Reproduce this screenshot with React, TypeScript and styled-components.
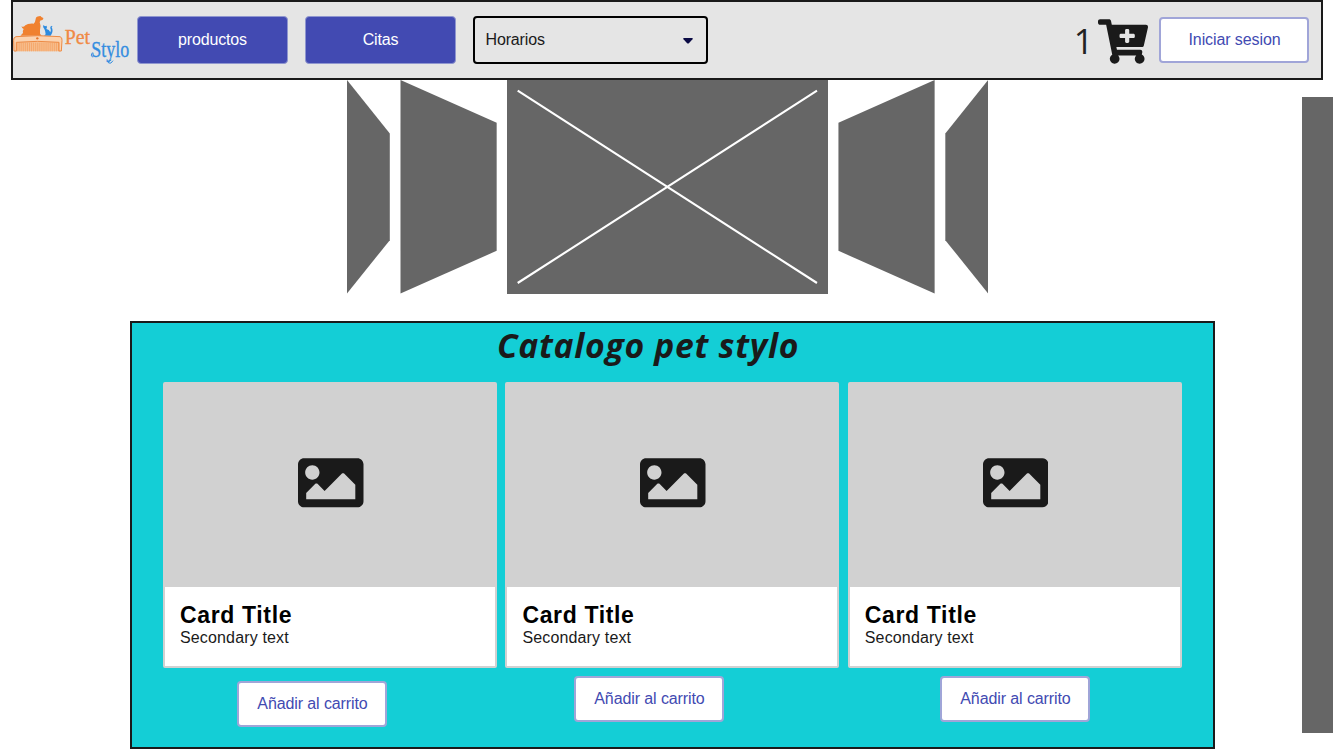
import React from "react";
import styled, { createGlobalStyle } from "styled-components";
import { FaCartPlus, FaImage } from "react-icons/fa";

const GlobalStyle = createGlobalStyle`
  * { box-sizing: border-box; }
  body {
    margin: 0;
    background: #fff;
    font-family: "Liberation Sans", Arial, sans-serif;
    font-size: 16px;
    overflow: hidden;
  }
`;

const Page = styled.div`
  width: 1333px;
  height: 749px;
  overflow: hidden;
`;

const Header = styled.header`
  display: flex;
  align-items: flex-start;
  width: 1312px;
  height: 80px;
  margin-left: 11px;
  border: 2px solid #1a1a1a;
  background: #e5e5e5;
`;

const Logo = styled.svg`
  display: block;
  width: 122px;
  height: 76px;
  flex: none;
  overflow: visible;
`;

const Nav = styled.nav`
  display: flex;
  align-items: flex-start;
  gap: 17px;
  margin: 14px 0 0 2px;
`;

const NavButton = styled.button`
  width: 151px;
  height: 48px;
  padding: 0;
  border: 1px solid #8f96cf;
  border-radius: 4px;
  background: #424ab2;
  color: #fff;
  font: inherit;
  letter-spacing: -0.15px;
`;

const Select = styled.div`
  display: flex;
  align-items: center;
  justify-content: space-between;
  width: 235px;
  height: 48px;
  padding: 0 13px 0 10.5px;
  border: 2px solid #000;
  border-radius: 4px;
  color: #1a1a1a;
  letter-spacing: -0.15px;
`;

const Caret = styled.svg`
  width: 10px;
  height: 6px;
  margin-top: 2px;
`;

const Account = styled.div`
  display: flex;
  align-items: flex-start;
  margin-left: auto;
  padding-right: 12px;
`;

const Count = styled.span`
  margin: 15px 4px 0 0;
  font: 400 34.5px/48px "Open Sans", sans-serif;
  color: #222;
`;

const CartIcon = styled(FaCartPlus)`
  width: 50px;
  height: 45px;
  margin: 17px 11.5px 0 0;
  color: #1a1a1a;
`;

const OutlineButton = styled.button`
  width: 150px;
  height: 46px;
  padding: 0 0 1px 1px;
  border: 2px solid #a0a5d8;
  border-radius: 4px;
  background: #fff;
  color: #424ab2;
  font: inherit;
  letter-spacing: -0.1px;
`;

const LoginButton = styled(OutlineButton)`
  margin-top: 15px;
`;

const Body = styled.div`
  display: flex;
  align-items: flex-start;
`;

const Main = styled.main`
  width: 1301.5px;
  flex: none;
`;

const Rail = styled.aside`
  width: 31.5px;
  height: 636px;
  margin-top: 17px;
  background: #666;
`;

const Carousel = styled.section`
  display: flex;
  gap: 10.7px;
  height: 213.5px;
  padding-left: 347px;
`;

const Slide = styled.div<{ $width: number; $inset?: number; $side?: "left" | "right" }>`
  width: ${(p) => p.$width}px;
  flex: none;
  background: #666;
  ${(p) =>
    p.$side === "left" &&
    `clip-path: polygon(0 0, 100% ${p.$inset}%, 100% ${100 - (p.$inset ?? 0)}%, 0 100%);`}
  ${(p) =>
    p.$side === "right" &&
    `clip-path: polygon(0 ${p.$inset}%, 100% 0, 100% 100%, 0 ${100 - (p.$inset ?? 0)}%);`}
`;

const Cross = styled.svg`
  display: block;
  width: 100%;
  height: 100%;
`;

const Catalog = styled.section`
  width: 1085px;
  height: 428px;
  margin: 27.5px 0 0 130px;
  border: 2px solid #1a1a1a;
  background: #14ced6;
`;

const CatalogTitle = styled.h1`
  margin: 0 0 0 365px;
  height: 59px;
  font: italic 700 33.7px/45px "Open Sans", sans-serif;
  letter-spacing: 0.72px;
  color: #1a1a1a;
`;

const Products = styled.div`
  display: flex;
  gap: 8.4px;
  padding-left: 31px;
`;

const Product = styled.div`
  width: 334px;
  flex: none;
`;

const Card = styled.article`
  height: 286px;
  border: 2px solid #d1d1d1;
  border-radius: 2px;
  background: #fff;
`;

const CardMedia = styled.div`
  display: flex;
  align-items: center;
  justify-content: center;
  height: 202.5px;
  padding: 0 0 4.5px 1.5px;
  background: #d1d1d1;
  color: #1a1a1a;
`;

const CardText = styled.div`
  padding: 13.5px 15px;
`;

const CardTitle = styled.h2`
  margin: 0;
  font-size: 23px;
  line-height: 30px;
  letter-spacing: 0.65px;
  color: #000;
`;

const CardSubtitle = styled.p`
  margin: 0;
  line-height: 16px;
  letter-spacing: 0.15px;
  color: #1a1a1a;
`;

const AddButton = styled(OutlineButton)<{ $left: number; $top: number }>`
  display: block;
  margin: ${(p) => p.$top}px 0 0 ${(p) => p.$left}px;
`;

const products = [
  { left: 74, top: 13 },
  { left: 68.6, top: 8 },
  { left: 92.2, top: 8 },
];

const teeth = Array.from({ length: 23 }, (_, i) => 48 + i * 5.8);

function PetLogo() {
  return (
    <Logo viewBox="39 6 366 228" role="img" aria-label="Pet Stylo">
      <path
        fill="#f0812f"
        d="M61 107 L69 99 Q66 95 71 87 Q66 85 64 78 Q69 84 76 76 Q83 70 101 71 Q106 67 107 57 Q108 49 117 49 Q122 46 124 51 L130 54 Q130 61 122 61 L119 66 Q124 78 120 90 L120 101 L125 107 H61 Z"
      />
      <path
        fill="#2c8be0"
        d="M130 75 L135 79 L140 77 Q142 83 139 87 Q148 88 151 97 Q155 91 151 85 Q149 79 156 77 Q159 79 155 82 Q162 94 152 107 H132 L137 103 Q137 94 133 87 Q127 83 130 75 Z"
      />
      <path fill="#f7c193" d="M45 124H181V154H45Z" />
      {teeth.map((x) => (
        <path key={x} d={`M${x} 128V154`} stroke="#f4a264" strokeWidth="2.6" />
      ))}
      <path
        fill="#fbd3b0"
        stroke="#ee8a43"
        strokeWidth="3"
        d="M48 110 Q113 104 180 110 Q187 112 186 121 L184 153 H177 V127 Q113 121 49 127 V153 H42 L41 121 Q40 112 48 110 Z"
      />
      <circle cx="112" cy="115" r="3.5" fill="#e6752a" />
      <g fontFamily="Liberation Serif, serif" strokeWidth="1">
        <text x="194" y="132" fontSize="64" textLength="76" lengthAdjust="spacingAndGlyphs" fill="#f08a45" stroke="#f08a45">
          Pet
        </text>
        <text x="274" y="172" fontSize="68" textLength="114" lengthAdjust="spacingAndGlyphs" fill="#348de0" stroke="#348de0">
          Stylo
        </text>
      </g>
      <path d="M277 158Q270 166 278 172M334 180Q322 184 326 189Q333 193 339 182" stroke="#348de0" strokeWidth="3" fill="none" />
    </Logo>
  );
}

export default function App() {
  return (
    <Page>
      <GlobalStyle />
      <Header>
        <PetLogo />
        <Nav>
          <NavButton>productos</NavButton>
          <NavButton>Citas</NavButton>
          <Select>
            Horarios
            <Caret viewBox="0 0 10 6">
              <path d="M1 0H9Q10.4.2 9.5 1.3L5.9 5.2Q5 6 4.1 5.2L.5 1.3Q-.4.2 1 0Z" fill="#0b0b45" />
            </Caret>
          </Select>
        </Nav>
        <Account>
          <Count>1</Count>
          <CartIcon />
          <LoginButton>Iniciar sesion</LoginButton>
        </Account>
      </Header>
      <Body>
        <Main>
          <Carousel>
            <Slide $width={42.8} $inset={25} $side="left" />
            <Slide $width={96.2} $inset={20} $side="left" />
            <Slide $width={320.4}>
              <Cross viewBox="0 0 320.4 213.5">
                <path d="M10.7 10.7L310 203M310 10.7L10.7 203" stroke="#fff" strokeWidth="2.1" fill="none" />
              </Cross>
            </Slide>
            <Slide $width={96.2} $inset={20} $side="right" />
            <Slide $width={42.8} $inset={25} $side="right" />
          </Carousel>
          <Catalog>
            <CatalogTitle>Catalogo pet stylo</CatalogTitle>
            <Products>
              {products.map((p) => (
                <Product key={p.left}>
                  <Card>
                    <CardMedia>
                      <FaImage size={65.5} />
                    </CardMedia>
                    <CardText>
                      <CardTitle>Card Title</CardTitle>
                      <CardSubtitle>Secondary text</CardSubtitle>
                    </CardText>
                  </Card>
                  <AddButton $left={p.left} $top={p.top}>Añadir al carrito</AddButton>
                </Product>
              ))}
            </Products>
          </Catalog>
        </Main>
        <Rail />
      </Body>
    </Page>
  );
}
